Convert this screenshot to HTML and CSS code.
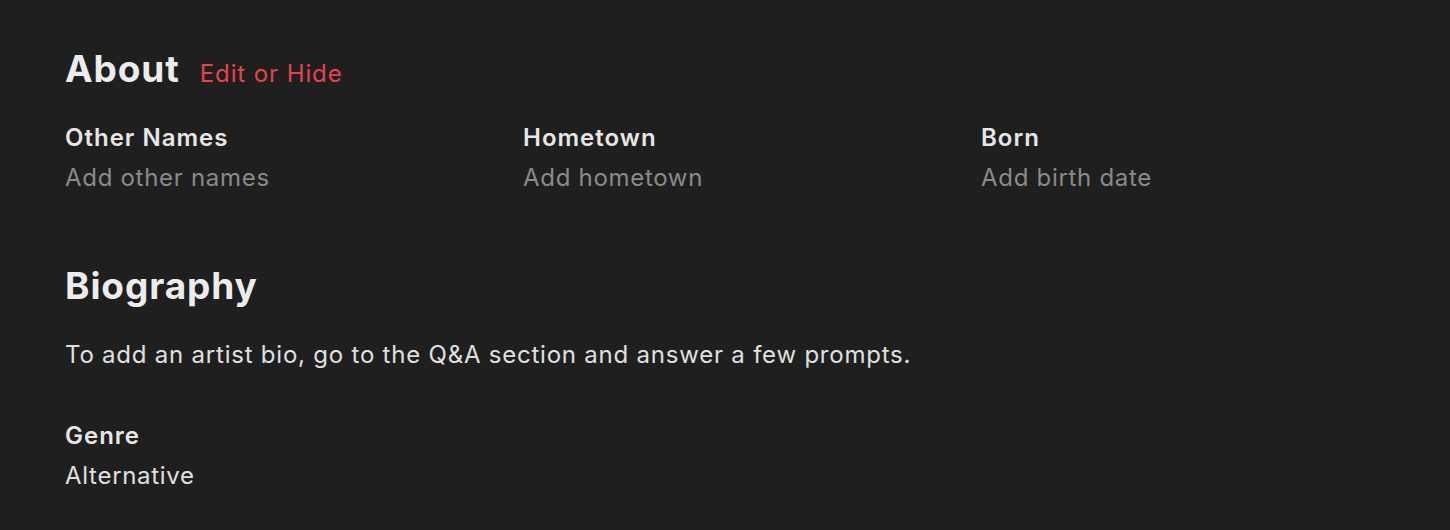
FILE: index.html
```html
<!DOCTYPE html>
<html lang="en">
<head>
    <meta charset="UTF-8">
    <meta name="viewport" content="width=device-width, initial-scale=1.0">
    <title>About</title>
    <link rel="stylesheet" href="styles.css">
</head>
<body>

    <!-- About -->
    <section class="about">
        <div class="section-head">
            <h2>About</h2>
            <a href="#" class="edit-link">Edit or Hide</a>
        </div>

        <div class="fields">
            <div class="field">
                <div class="field-label">Other Names</div>
                <div class="field-value muted">Add other names</div>
            </div>
            <div class="field">
                <div class="field-label">Hometown</div>
                <div class="field-value muted">Add hometown</div>
            </div>
            <div class="field">
                <div class="field-label">Born</div>
                <div class="field-value muted">Add birth date</div>
            </div>
        </div>
    </section>

    <!-- Biography -->
    <section class="biography">
        <h2>Biography</h2>
        <p class="bio-text">To add an artist bio, go to the Q&amp;A section and answer a few prompts.</p>

        <div class="field genre">
            <div class="field-label">Genre</div>
            <div class="field-value">Alternative</div>
        </div>
    </section>

</body>
</html>
```

FILE: styles.css
```css
/* General Styling */
body {
    font-family: 'Inter', 'Noto Sans', sans-serif;
    margin: 0;
    padding: 47px 0 0 65px;
    background-color: #1f1f1f;
    color: #e8e8e8;
}

h2 {
    margin: 0;
    font-size: 37px;
    line-height: 44px;
    font-weight: 700;
    color: #ececec;
    letter-spacing: 0.9px;
}

/* About Section */
.section-head {
    display: flex;
    align-items: baseline;
    gap: 20px;
}

.edit-link {
    font-size: 24px;
    color: #e5434e;
    text-decoration: none;
    letter-spacing: 0.9px;
}

.fields {
    display: grid;
    grid-template-columns: repeat(3, 458px);
    margin-top: 27px;
}

.field-label {
    font-size: 24px;
    line-height: 40px;
    font-weight: 600;
    color: #e6e6e6;
    letter-spacing: 1px;
}

.field-value {
    font-size: 24px;
    line-height: 40px;
    color: #e0e0e0;
    letter-spacing: 0.7px;
}

.field-value.muted {
    color: #8a8a8a;
}

/* Biography Section */
.biography {
    margin-top: 66px;
}

.bio-text {
    margin: 27px 0 0;
    font-size: 24px;
    line-height: 40px;
    color: #e0e0e0;
    letter-spacing: 0.78px;
}

.genre {
    margin-top: 41px;
}
```
